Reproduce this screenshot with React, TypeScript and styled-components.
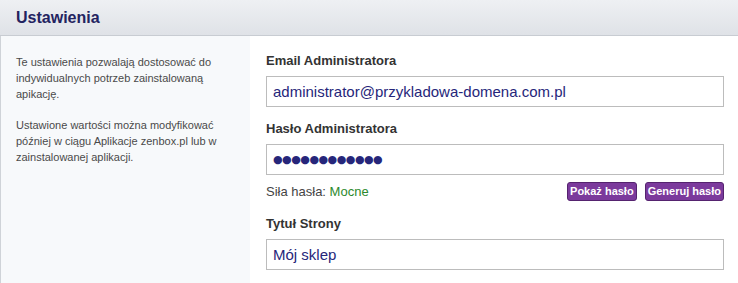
import React from 'react'
import styled, { createGlobalStyle } from 'styled-components'

const GlobalStyle = createGlobalStyle`
  html, body {
    margin: 0;
    padding: 0;
    background: #ffffff;
    font-family: "Liberation Sans", Arial, sans-serif;
  }
`

const Fields = [
    { label: 'Email Administratora', value: 'administrator@przykladowa-domena.com.pl' },
]

const App = () => {
  return (
    <>
      <GlobalStyle />
      <Container>
        <Header>
          <Title>Ustawienia</Title>
        </Header>
        <Body>
          <Side>
            <Para>Te ustawienia pozwalają dostosować do indywidualnych potrzeb zainstalowaną apikację.</Para>
            <Para>Ustawione wartości można modyfikować później w ciągu Aplikacje zenbox.pl lub w zainstalowanej aplikacji.</Para>
          </Side>
          <Main>
            {Fields.map((f, id) => (
              <Field key={id}>
                <Label>{f.label}</Label>
                <Input>{f.value}</Input>
              </Field>
            ))}
            <Field>
              <Label>Hasło Administratora</Label>
              <Input dots>●●●●●●●●●●●●</Input>
              <Strength>
                <Text>Siła hasła: <Good>Mocne</Good></Text>
                <Buttons>
                  <Button>Pokaż hasło</Button>
                  <Button>Generuj hasło</Button>
                </Buttons>
              </Strength>
            </Field>
            <Field>
              <Label>Tytuł Strony</Label>
              <Input>Mój sklep</Input>
            </Field>
          </Main>
        </Body>
      </Container>
    </>
  )
}

export default App

const Container = styled.div`
width: 738px;
height: 283px;
overflow: hidden;
`
const Header = styled.div`
height: 35px;
display: flex;
align-items: center;
padding-left: 16px;
background: linear-gradient(#eef0f3, #dfe2e7);
border-bottom: 1px solid #c8ccd2;
`
const Title = styled.div`
font-size: 16px;
font-weight: bold;
color: #232360;
`
const Body = styled.div`
display: flex;
height: 247px;
`
const Side = styled.div`
width: 234px;
padding: 19px 0 0 15px;
background: #f7f9fb;
border-left: 1px solid #cfd3d8;
`
const Para = styled.p`
margin: 0 0 16px;
font-size: 11px;
line-height: 15.8px;
color: #4a4a4a;
width: 220px;
`
const Main = styled.div`
flex: 1;
padding: 16px 14px 0 16px;
display: flex;
flex-direction: column;
gap: 13px;
`
const Field = styled.div`
display: flex;
flex-direction: column;
`
const Label = styled.div`
font-size: 13px;
font-weight: bold;
color: #333;
height: 17px;
line-height: 17px;
margin-bottom: 7px;
`
const Input = styled.div<{ dots?: boolean }>`
height: 29px;
border: 1px solid #bcbcbc;
display: flex;
align-items: center;
padding-left: 6px;
font-family: ${p => (p.dots ? '"DejaVu Sans", sans-serif' : 'inherit')};
font-size: ${p => (p.dots ? '11px' : '15px')};
letter-spacing: ${p => (p.dots ? '-0.5px' : '0')};
color: #26267a;
background: #fff;
`
const Strength = styled.div`
display: flex;
justify-content: space-between;
align-items: center;
margin: 7px 0 2px;
height: 18px;
`
const Text = styled.div`
font-size: 13px;
color: #444;
`
const Good = styled.span`
color: #2d8a2d;
`
const Buttons = styled.div`
display: flex;
gap: 8px;
`
const Button = styled.button`
height: 19px;
padding: 0 2px;
background: #7b3a9c;
border: 1px solid #55236f;
border-radius: 3px;
color: #fff;
font-family: "Liberation Sans", Arial, sans-serif;
font-size: 11px;
font-weight: bold;
display: flex;
align-items: center;
`
